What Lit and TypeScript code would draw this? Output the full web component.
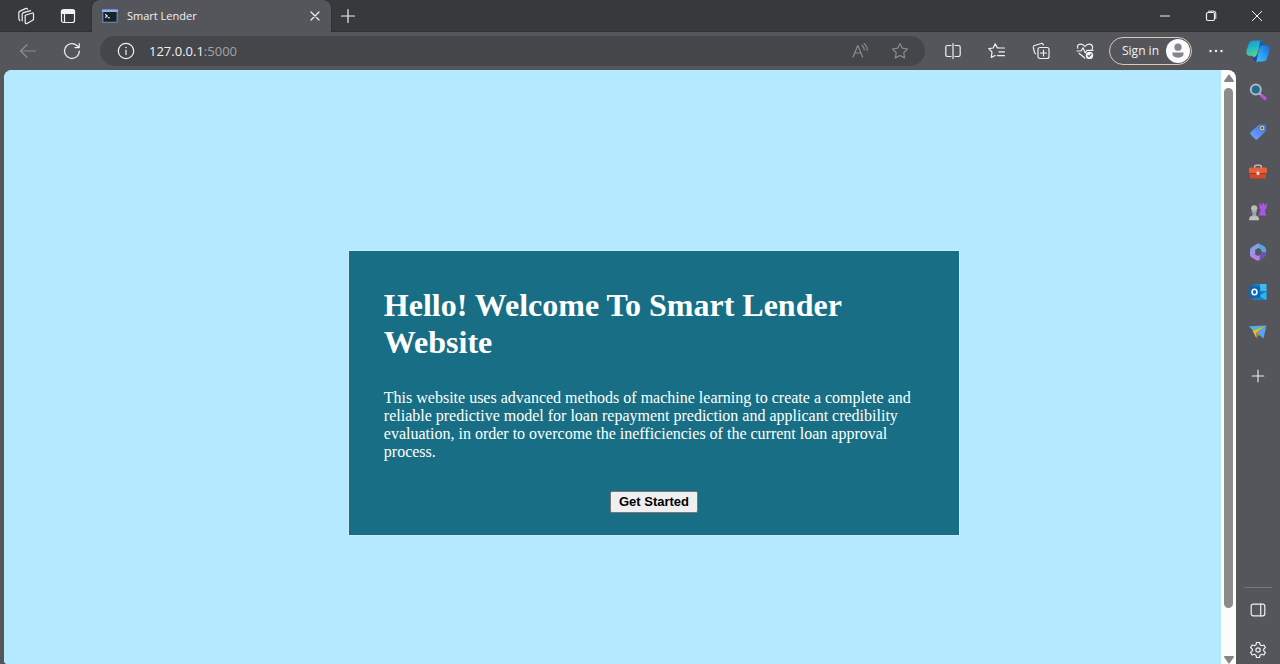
import { LitElement, html, css, svg } from "lit";
import { customElement } from "lit/decorators.js";

const icon = (body: unknown, size = 20) =>
  html`<svg width=${size} height=${size} viewBox="0 0 20 20" fill="none" stroke="currentColor" stroke-width="1.2" stroke-linecap="round" stroke-linejoin="round" aria-hidden="true">${body}</svg>`;

const icons = {
  workspaces: svg`<path d="M9.2 9.3 L16.4 7 Q17.5 6.8 17.5 8 V13.7 L11 17.4 Q9.2 18 9.2 16.5Z"/><path d="M6.2 14.8 V8.3 Q6.2 7 7.5 6.6 L14.6 4.6"/><path d="M3.8 14.5 Q2.8 13.3 2.8 12 V7 Q2.8 5.7 4 5.1 L9.4 2.6 Q10.8 2 11.6 3.1"/>`,
  tabMenu: svg`<rect x="3.5" y="3.5" width="13" height="13" rx="2"/><path d="M3.5 4.6H16.5V7.4H3.5Z" fill="currentColor"/><path d="M6.5 8V16"/>`,
  console: svg`<rect x="2" y="3" width="16" height="14" fill="#17222a" stroke="#6f92bd"/><path d="M2 4.3H18" stroke="#8fb3ed" stroke-width="2.4"/><path d="M5 8.5L7 10L5 11.5M8 12H9.5" stroke="#fff"/>`,
  close: svg`<path d="M6 6L14 14M14 6L6 14"/>`,
  plus: svg`<path d="M10 3.5V16.5M3.5 10H16.5"/>`,
  min: svg`<path d="M5.5 10H14.5" stroke-width="1"/>`,
  max: svg`<rect x="5.5" y="6.5" width="8" height="8" rx="1.5"/><path d="M7.5 5.2H13Q14.8 5.2 14.8 7V12.5" stroke-width="1"/>`,
  winClose: svg`<path d="M5.3 5.3L14.7 14.7M14.7 5.3L5.3 14.7" stroke-width="1"/>`,
  back: svg`<path d="M17.5 10H2.5M9 3.7L2.5 10L9 16.3"/>`,
  refresh: svg`<path d="M17.3 10A7.4 7.4 0 1 1 14.8 4.5L17 6.5M17.2 2.5V6.6H13"/>`,
  info: svg`<circle cx="10" cy="10" r="7.7"/><path d="M10 9V13.5"/><circle cx="10" cy="6.5" r=".8" fill="currentColor" stroke="none"/>`,
  read: svg`<path d="M3 16L7.8 4.5L12.6 16M4.6 12H11M12 4.2Q14 5.6 14.2 8.8M14.2 2.6Q17.2 5 17.3 9.2"/>`,
  star: svg`<path d="M10 2.6L12.3 7.2L17.5 8L13.8 11.7L14.6 16.9L10 14.5L5.4 16.9L6.2 11.7L2.5 8L7.7 7.2Z"/>`,
  split: svg`<path d="M8 4.5H4.5Q2.8 4.5 2.8 6.2V13.8Q2.8 15.5 4.5 15.5H8M12 4.5H15.5Q17.2 4.5 17.2 6.2V13.8Q17.2 15.5 15.5 15.5H12"/><path d="M10 2.5V17.5"/>`,
  favorites: svg`<path d="M11.2 6.9L10.2 6.8L8.2 2.8L6.2 7L1.8 7.7L5 11L4.3 16.4L8.2 14.5M8.2 2.8L10.4 7H17.5M12 10.8H17.5M10.5 14.6H17.5"/>`,
  collections: svg`<rect x="7" y="6.5" width="11" height="11" rx="2"/><path d="M12.5 9V15M9.5 12H15.5M4.8 12.8Q3.8 12.4 3.5 11.4L2.3 6.7Q2 5 3.6 4.5L10.2 2.5Q11.8 2.2 12.4 4"/>`,
  health: svg`<path d="M2.8 7.2Q1.5 3.5 5.5 3.1Q8.3 3 10 5.5Q11.7 3 14.5 3.1Q18.5 3.6 17.3 8.2M2 10H6L8 6.8L10.3 12L12 9.3H18M4 12.3L9.8 17"/><circle cx="14.5" cy="14.4" r="3.7" fill="currentColor" stroke="none"/><path d="M13 14.6L14 15.6L16.1 13.4" stroke="#55565b"/>`,
  person: svg`<circle cx="10" cy="10" r="10" fill="#fbfbfb" stroke="none"/><circle cx="10" cy="6.8" r="3" fill="#85858a" stroke="none"/><path d="M5.3 11.3H14.7Q15 15.5 10 15.7Q5 15.5 5.3 11.3Z" fill="#85858a" stroke="none"/>`,
  more: svg`<g fill="currentColor" stroke="none"><circle cx="4.5" cy="10" r="1.2"/><circle cx="10" cy="10" r="1.2"/><circle cx="15.5" cy="10" r="1.2"/></g>`,
  panel: svg`<rect x="3.2" y="4.2" width="13.6" height="11.6" rx="2"/><path d="M12.7 4.2V15.8"/>`,
  gear: svg`<path d="M8.5 2.5H11.5L12 4.8L13.6 5.7L15.9 5L17.4 7.5L15.7 9.1V10.9L17.4 12.5L15.9 15L13.6 14.3L12 15.2L11.5 17.5H8.5L8 15.2L6.4 14.3L4.1 15L2.6 12.5L4.3 10.9V9.1L2.6 7.5L4.1 5L6.4 5.7L8 4.8Z"/><circle cx="10" cy="10" r="2.2"/>`,
  copilot: svg`<defs><linearGradient id="ca" x1="0" y1="0" x2=".3" y2="1"><stop stop-color="#1492d8"/><stop offset=".5" stop-color="#23b9c5"/><stop offset="1" stop-color="#5cd383"/></linearGradient><linearGradient id="cb" x1="1" y1="0" x2="0" y2="1"><stop stop-color="#1668d8"/><stop offset=".5" stop-color="#2b9af0"/><stop offset="1" stop-color="#37c6ee"/></linearGradient></defs><g stroke="none"><path d="M6 1.2H12.5Q14.2 1.4 14.8 4.6Q12 4.6 11 7L9 13Q8.3 15 6.5 15.2L5 14H2.5Q-.3 13.5.5 9.5L2.5 3.6Q3.5 1.2 6 1.2Z" fill="url(#ca)"/><path d="M14.2 5.3H17.5Q20.4 6 19.5 10L17.6 16.2Q16.8 18.7 14 18.7H8.2L9.8 12.8L11.5 7.2Q12.2 5.3 14.2 5.3Z" fill="url(#cb)"/><path d="M5.3 15Q8.5 16 9.8 12.5L9 17.5Q8.7 18.7 7.8 18.7Q6 18 5.3 15Z" fill="#1744c8"/><path d="M11.8 1.2Q14.5 1.2 15.3 5.2H13.5Q11.6 5.7 10.8 8.2Z" fill="#145eaf"/></g>`,
  search: svg`<circle cx="7.8" cy="7.6" r="5" fill="#256b91" stroke="#a9b9c1" stroke-width="2"/><path d="M12 12L13.3 13.2" stroke="#b0b7be" stroke-width="2"/><path d="M14 13.8L17 16.4" stroke="#b850e8" stroke-width="3.4"/>`,
  tag: svg`<defs><linearGradient id="tg" x1="1" y1="0" x2="0" y2="1"><stop stop-color="#3f6fe8"/><stop offset="1" stop-color="#75a7ff"/></linearGradient></defs><path d="M11 2.5L17 2.3Q18 2.4 18 3.4L17.7 9.2L9.5 17.3Q8.5 18.2 7.4 17.2L2.5 12.3Q1.5 11.2 2.6 10.2Z" fill="url(#tg)" stroke="none"/><circle cx="14.2" cy="6" r="1.6" fill="#1d388f" stroke="#f7c633"/>`,
  toolbox: svg`<path d="M6.7 6V4.3Q6.8 3.2 8 3.2H12Q13.2 3.2 13.3 4.3V6" stroke="#b9b9b9" stroke-width="1.6"/><rect x="1" y="5.6" width="18" height="5.9" rx="1.5" fill="#e9613a" stroke="none"/><path d="M2 11.5H18V15.5Q18 16.6 16.8 16.6H3.2Q2 16.6 2 15.5Z" fill="#d04a2a" stroke="none"/><path d="M2 11.5H18" stroke="#9f301e" stroke-width=".8"/><rect x="8.5" y="9.6" width="3" height="3.4" rx="1.2" fill="#e2ded8" stroke="none"/>`,
  games: svg`<g stroke="none"><path d="M11.3 1.2L13.2 2V3.2H14.2V1.2H16V3.2L17 2.6L18.9 1.4L18.4 6.4L16.8 7.8L18 13.6H10.8L12.7 7.8L11.6 6.4Z" fill="#ad55e9"/><circle cx="6.2" cy="6.3" r="3.1" fill="#babbbb"/><path d="M3.7 8.7H8.8V10.4L7.8 11L8.8 15.1H3.6L4.7 11L3.7 10.4Z" fill="#a1a3a5"/><path d="M2.5 14.3H10Q11 15.8 11 18.3H1Q1 15.8 2.5 14.3Z" fill="#bec0c1"/></g>`,
  office: svg`<g stroke="none"><path d="M10.5 1.3L16 4.3Q18.2 5.6 18.2 8V12L13.2 9.2V7.6L9.8 5.8Q8 5 8.2 2.6Z" fill="#58a6df"/><path d="M10.5 1.3L4 5Q2 6.2 2 8.5V14.3L7.2 11.8V7.8L11.8 5.3Q9.3 4.5 10.5 1.3Z" fill="#8f9be8"/><path d="M2 11.2V12.8Q2 14.6 3.6 15.5L8.4 18.2Q10 19 11.6 18.2L13 17.3L12 12.8L9.8 14L7.2 12.4V11.8Q4 14 2 11.2Z" fill="#b683e3"/><path d="M18.2 9V12.2Q18.2 14.2 16.4 15.3L10.5 18.5Q12.6 16.8 11.2 13.3L13.2 12V9.2Q17 11.5 18.2 9Z" fill="#6b54b4"/></g>`,
  outlook: svg`<g stroke="none"><rect x="5" y="2" width="13.5" height="16" rx="1.2" fill="#1580ca"/><path d="M12 2H17.3Q18.5 2 18.5 3.2V9H12Z" fill="#41b9ee"/><path d="M5 9.5L12.3 13L18.5 9.5V16.8Q18.5 18 17.3 18H6.2Q5 18 5 16.8Z" fill="#35b0ea"/><path d="M5 10.5L17.8 18H6.2Q5 18 5 16.8Z" fill="#157fca"/><rect x=".8" y="4.3" width="11.4" height="11.4" rx="1.3" fill="#0867b7"/></g><ellipse cx="6.5" cy="10" rx="2.4" ry="2.7" stroke="#fff" stroke-width="1.6"/>`,
  plane: svg`<g stroke="none"><path d="M1 4.3L18.5 3.4L5.6 9.6Z" fill="#55b0dc"/><path d="M18.5 3.4L8.4 11V16.2L4.6 9Z" fill="#eeb91d"/><path d="M18.5 3.4L15.4 16.6L8.6 10.8Z" fill="#55a5f4"/><path d="M8.4 16.2L11 12.8L8.6 10.8Z" fill="#c49120"/></g>`,
};

@customElement("app-root")
export class AppRoot extends LitElement {
  static styles = css`
    :host {
      display: flex;
      flex-direction: column;
      height: 100vh;
      background: #55565b;
      color: #f1f1f2;
      font: 12px/16px "Open Sans", "Noto Sans", sans-serif;
      overflow: hidden;
    }
    * { box-sizing: border-box; }
    svg { display: block; flex: none; }
    button { font: inherit; color: inherit; }
    .icon {
      display: grid;
      place-items: center;
      flex: none;
      width: 44px;
      height: 32px;
      padding: 0;
      border: 0;
      background: none;
    }
    .titlebar {
      display: flex;
      flex: none;
      height: 32px;
      background: #38393d;
      box-shadow: inset 0 -1px #303135;
    }
    .leading { display: flex; padding-left: 4px; }
    .leading .icon + .icon { width: 40px; }
    .tab {
      display: flex;
      align-items: center;
      gap: 8px;
      width: 239px;
      margin-left: 4px;
      padding-left: 9px;
      border-radius: 8px 8px 0 0;
      background: #55565b;
      box-shadow: 0 0 2px #222;
      clip-path: inset(0 -3px 0 -3px);
    }
    .title { flex: 1; font-size: 11px; }
    .tab .icon { width: 32px; }
    .new { width: 34px; }
    .window { display: flex; margin-left: auto; }
    .window .icon { width: 46px; }
    .toolbar {
      display: flex;
      align-items: center;
      flex: none;
      height: 38px;
      padding-left: 6px;
    }
    .back, .muted { color: #8b8c90; }
    .nav { display: flex; width: 94px; }
    .address {
      display: flex;
      align-items: center;
      flex: 1;
      height: 30px;
      padding: 0 5px 0 6px;
      border-radius: 15px;
      background: #454649;
    }
    .address .icon { width: 40px; }
    .url {
      flex: 1;
      min-width: 0;
      margin-left: 3px;
      font-size: 13px;
    }
    .port { color: #a2a3a6; }
    .actions { display: flex; padding: 0 2px 0 6px; }
    .signin {
      display: flex;
      align-items: center;
      justify-content: space-between;
      width: 83px;
      height: 28px;
      padding: 0 1px 0 12px;
      border: 1px solid #e0c7b4;
      border-radius: 14px;
      background: none;
    }
    .more { width: 48px; }
    .copilot { width: 36px; margin-right: 4px; }
    .body { display: flex; flex: 1; min-height: 0; }
    .view {
      display: flex;
      flex: 1;
      margin-left: 4px;
      border-radius: 8px 8px 0 4px;
      overflow: hidden;
      background: #fcfcfc;
    }
    .page {
      flex: 1;
      padding: 180px 0 0 83px;
      background: #b5e9ff;
      font-family: "Liberation Serif", "Times New Roman", serif;
    }
    .card {
      display: flex;
      flex-direction: column;
      width: 54%;
      min-width: 420px;
      margin: 0 auto;
      padding: 36px 35px 22px;
      border: 1px solid #c6edfa;
      background: #186f85;
      color: #fff;
    }
    h1 {
      margin: 0;
      font-size: 32px;
      line-height: 37px;
    }
    p {
      margin: 28px 0 30px;
      font-size: 16px;
      line-height: 18px;
    }
    .start {
      align-self: center;
      height: 22px;
      padding: 0 8px;
      border: 1px solid #777;
      border-radius: 2px;
      background: #efefef;
      color: #000;
      font: bold 13px/18px "Liberation Sans", Arial, sans-serif;
    }
    .scroll {
      display: flex;
      flex-direction: column;
      align-items: center;
      width: 15px;
      padding-top: 4px;
      color: #858585;
    }
    .thumb {
      flex: 1;
      width: 9px;
      margin: 6px 0 48px;
      border-radius: 5px;
      background: #8b8b8b;
    }
    .side {
      display: flex;
      flex-direction: column;
      align-items: center;
      flex: none;
      width: 44px;
      padding-top: 2px;
    }
    .side .icon { height: 40px; }
    .add { margin-top: 4px; }
    .line {
      width: 28px;
      margin: auto 0 2px;
      border: 0;
      border-top: 1px solid #77787c;
    }
    .side .settings { margin-bottom: -6px; }
  `;

  private button(name: string, glyph: unknown, extra = "", size = 20) {
    return html`<button class="icon ${extra}" aria-label=${name}>${icon(glyph, size)}</button>`;
  }

  render() {
    const b = this.button;
    return html`
      <header class="titlebar">
        <div class="leading">${b("Workspaces", icons.workspaces)}${b("Tab actions", icons.tabMenu)}</div>
        <div class="tab">${icon(icons.console, 18)}<span class="title">Smart Lender</span>${b("Close tab", icons.close)}</div>
        ${b("New tab", icons.plus, "new")}
        <div class="window">${b("Minimize", icons.min)}${b("Restore", icons.max)}${b("Close", icons.winClose)}</div>
      </header>
      <nav class="toolbar">
        <div class="nav">${b("Back", icons.back, "back")}${b("Refresh", icons.refresh)}</div>
        <div class="address">
          ${b("Site information", icons.info)}
          <span class="url">127.0.0.1<span class="port">:5000</span></span>
          ${b("Read aloud", icons.read, "muted")}${b("Add to favorites", icons.star, "muted")}
        </div>
        <div class="actions">
          ${b("Split screen", icons.split)}${b("Favorites", icons.favorites)}${b("Collections", icons.collections)}${b("Browser essentials", icons.health)}
        </div>
        <button class="signin">Sign in ${icon(icons.person, 24)}</button>
        ${b("More", icons.more, "more")}${b("Copilot", icons.copilot, "copilot", 24)}
      </nav>
      <div class="body">
        <div class="view">
          <main class="page">
            <section class="card">
              <h1>Hello! Welcome To Smart Lender Website</h1>
              <p>This website uses advanced methods of machine learning to create a complete and reliable predictive model for loan repayment prediction and applicant credibility evaluation, in order to overcome the inefficiencies of the current loan approval process.</p>
              <button class="start">Get Started</button>
            </section>
          </main>
          <div class="scroll" aria-hidden="true">
            <svg width="10" height="8"><path d="M5 0L10 7Q10 8 9 8H1Q0 8 0 7Z" fill="currentColor"/></svg>
            <div class="thumb"></div>
            <svg width="10" height="8"><path d="M5 8L10 1Q10 0 9 0H1Q0 0 0 1Z" fill="currentColor"/></svg>
          </div>
        </div>
        <aside class="side">
          ${b("Search", icons.search)}${b("Shopping", icons.tag)}${b("Tools", icons.toolbox)}${b("Games", icons.games)}${b("Microsoft 365", icons.office)}${b("Outlook", icons.outlook)}${b("Drop", icons.plane)}
          ${b("Customize", icons.plus, "add", 18)}
          <hr class="line" />
          ${b("Toggle sidebar", icons.panel)}${b("Settings", icons.gear, "settings")}
        </aside>
      </div>
    `;
  }
}
